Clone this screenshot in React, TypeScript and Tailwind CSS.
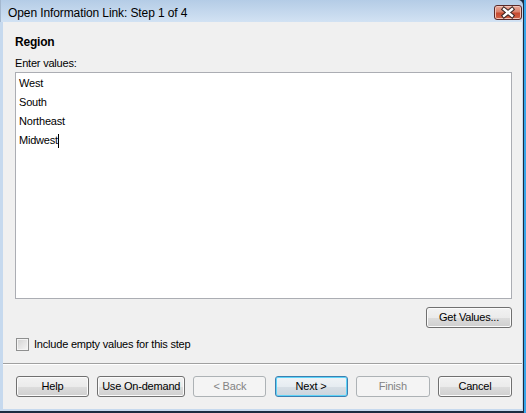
import { useState } from 'react';

const btnBase =
    'h-[21px] rounded-[3px] border text-[11px] tracking-[-0.2px] leading-none flex items-center justify-center';
const btnNormal =
    'border-[#707070] text-black bg-[linear-gradient(to_bottom,#f2f2f2_0%,#ebebeb_50%,#dddddd_50%,#cfcfcf_100%)] shadow-[inset_0_0_0_1px_#fbfbfb]';
const btnDefault =
    'border-[#3c7fb1] text-black bg-[linear-gradient(to_bottom,#f0f4f7_0%,#e6ecf1_50%,#d7dfe6_50%,#ccd5dd_100%)] shadow-[inset_0_0_0_1px_#5fd4f8]';
const btnDisabled = 'border-[#adb2b5] text-[#838383] bg-[#f4f4f4]';

function CloseButton() {
    return (
        <div className="mt-[5px] w-[28px] h-[15px] rounded-[3px] border border-[#5a2a28] bg-[linear-gradient(to_bottom,#e9a99a_0%,#d9826c_45%,#c64a30_55%,#d2654a_100%)] shadow-[inset_0_0_0_1px_#f2c4b8] flex items-center justify-center">
            <svg width="26" height="13" viewBox="0 0 26 13">
                <path d="M9 3.2 L17 9.8 M17 3.2 L9 9.8" stroke="#3a2422" strokeWidth="4.4" strokeLinecap="square" fill="none" />
                <path d="M9 3.2 L17 9.8 M17 3.2 L9 9.8" stroke="#ffffff" strokeWidth="2.4" strokeLinecap="square" fill="none" />
            </svg>
        </div>
    );
}

export default function App() {
    const [values, setValues] = useState(['West', 'South', 'Northeast', 'Midwest']);
    const [includeEmpty, setIncludeEmpty] = useState(false);

    return (
        <div className="w-[526px] h-[413px] flex border-r-2 border-r-[#36a5e9] bg-[#1c2b40] font-['Liberation_Sans',Arial,sans-serif] text-black select-none">
            <div className="flex-1 flex flex-col border-r border-r-[#1c2b40] border-b-2 border-b-[#1c2b40]">
                {/* Title bar */}
                <div className="h-[22px] flex items-start justify-between pl-[7px] pr-[1px] border-l border-l-[#a4b8cf] bg-[linear-gradient(to_bottom,#b4cce6,#d2e2f3)] rounded-tr-[5px]">
                    <span className="mt-[5px] text-[12px] leading-[16px] tracking-[-0.1px] text-black">
                        Open Information Link: Step 1 of 4
                    </span>
                    <CloseButton />
                </div>

                {/* Body */}
                <div className="flex-1 flex flex-col bg-[#f0f0f0] border-l-[3px] border-l-[#c6d9ee] border-r border-r-[#c6d9ee] border-b-2 border-b-[#c6d9ee]">
                    <div className="flex flex-col pt-[13px] pl-[12px] pr-[10px]">
                        <div className="text-[12px] font-bold leading-[15px] tracking-[-0.2px]">Region</div>
                        <div className="mt-[6px] text-[11px] leading-[15px] tracking-[-0.2px]">Enter values:</div>

                        <div className="mt-[1px] h-[227px] bg-white border border-[#abadb3] border-t-[#abadb3] pl-[3px] pt-[1px] text-[11px] leading-[19px] tracking-[-0.2px]">
                            {values.map((v, i) => (
                                <div key={i} className="flex items-center">
                                    <span>{v}</span>
                                    {i === values.length - 1 && <span className="inline-block w-px h-[14px] bg-black" />}
                                </div>
                            ))}
                        </div>

                        <div className="mt-[8px] flex justify-end">
                            <button
                                className={`${btnBase} ${btnNormal} w-[86px]`}
                                onClick={() => setValues([...values])}
                            >
                                Get Values...
                            </button>
                        </div>

                        <label className="mt-[10px] flex items-center gap-[5px] pl-[1px] h-[13px]">
                            <span
                                onClick={() => setIncludeEmpty(!includeEmpty)}
                                className="w-[13px] h-[13px] border border-[#8e8f8f] bg-[linear-gradient(135deg,#d2d2d2,#f6f6f6)] shadow-[inset_0_0_0_1px_#f4f4f4]"
                            />
                            <span className="text-[11px] leading-[13px] tracking-[-0.2px]">Include empty values for this step</span>
                        </label>
                    </div>

                    {/* Separator */}
                    <div className="mt-[12px] border-t border-t-[#a0a0a0] border-b border-b-white" />

                    <div className="mt-[11px] flex justify-between pl-[13px] pr-[10px]">
                        <button className={`${btnBase} ${btnNormal} w-[73px]`}>Help</button>
                        <button className={`${btnBase} ${btnNormal} w-[88px]`}>Use On-demand</button>
                        <button className={`${btnBase} ${btnDisabled} w-[73px]`} disabled>&lt; Back</button>
                        <button className={`${btnBase} ${btnDefault} w-[73px]`}>Next &gt;</button>
                        <button className={`${btnBase} ${btnDisabled} w-[74px]`} disabled>Finish</button>
                        <button className={`${btnBase} ${btnNormal} w-[74px]`}>Cancel</button>
                    </div>
                </div>
            </div>
        </div>
    );
}
